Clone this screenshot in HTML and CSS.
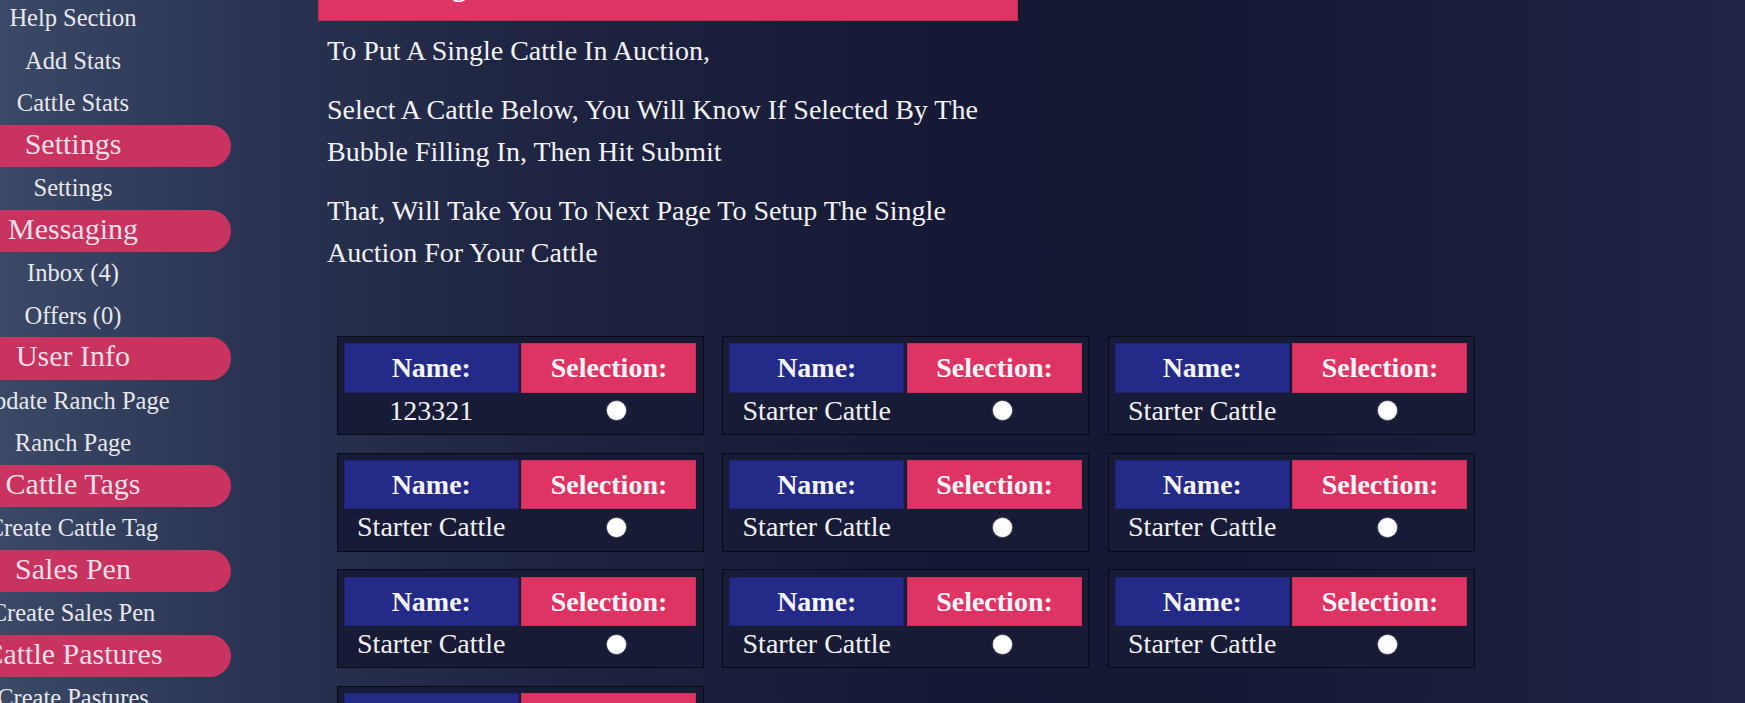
FILE: index.html
```html
<!DOCTYPE html>
<html lang="en">
<head>
<meta charset="utf-8">
<title>Single Cattle Auction</title>
<link rel="stylesheet" href="styles.css">
</head>
<body>
<div class="page">
  <nav class="sidebar">
    <a class="link">Help Section</a>
    <a class="link">Add Stats</a>
    <a class="link">Cattle Stats</a>
    <div class="pill">Settings</div>
    <a class="link">Settings</a>
    <div class="pill">Messaging</div>
    <a class="link">Inbox (4)</a>
    <a class="link">Offers (0)</a>
    <div class="pill">User Info</div>
    <a class="link">Update Ranch Page</a>
    <a class="link">Ranch Page</a>
    <div class="pill">Cattle Tags</div>
    <a class="link">Create Cattle Tag</a>
    <div class="pill">Sales Pen</div>
    <a class="link">Create Sales Pen</a>
    <div class="pill">Cattle Pastures</div>
    <a class="link">Create Pastures</a>
  </nav>

  <main class="main">
    <div class="title-bar"><h2 class="title">Single Cattle Auction</h2></div>
    <div class="intro">
      <p>To Put A Single Cattle In Auction,</p>
      <p>Select A Cattle Below, You Will Know If Selected By The Bubble Filling In, Then Hit Submit</p>
      <p>That, Will Take You To Next Page To Setup The Single Auction For Your Cattle</p>
    </div>

    <form class="cards">
      <div class="card">
        <div class="head name">Name:</div><div class="head sel">Selection:</div>
        <div class="cell">123321</div><div class="cell"><span class="radio"></span></div>
      </div>
      <div class="card">
        <div class="head name">Name:</div><div class="head sel">Selection:</div>
        <div class="cell">Starter Cattle</div><div class="cell"><span class="radio"></span></div>
      </div>
      <div class="card">
        <div class="head name">Name:</div><div class="head sel">Selection:</div>
        <div class="cell">Starter Cattle</div><div class="cell"><span class="radio"></span></div>
      </div>
      <div class="card">
        <div class="head name">Name:</div><div class="head sel">Selection:</div>
        <div class="cell">Starter Cattle</div><div class="cell"><span class="radio"></span></div>
      </div>
      <div class="card">
        <div class="head name">Name:</div><div class="head sel">Selection:</div>
        <div class="cell">Starter Cattle</div><div class="cell"><span class="radio"></span></div>
      </div>
      <div class="card">
        <div class="head name">Name:</div><div class="head sel">Selection:</div>
        <div class="cell">Starter Cattle</div><div class="cell"><span class="radio"></span></div>
      </div>
      <div class="card">
        <div class="head name">Name:</div><div class="head sel">Selection:</div>
        <div class="cell">Starter Cattle</div><div class="cell"><span class="radio"></span></div>
      </div>
      <div class="card">
        <div class="head name">Name:</div><div class="head sel">Selection:</div>
        <div class="cell">Starter Cattle</div><div class="cell"><span class="radio"></span></div>
      </div>
      <div class="card">
        <div class="head name">Name:</div><div class="head sel">Selection:</div>
        <div class="cell">Starter Cattle</div><div class="cell"><span class="radio"></span></div>
      </div>
      <div class="card">
        <div class="head name">Name:</div><div class="head sel">Selection:</div>
        <div class="cell">Starter Cattle</div><div class="cell"><span class="radio"></span></div>
      </div>
    </form>
  </main>
</div>
</body>
</html>
```

FILE: styles.css
```css
html {
  background: linear-gradient(90deg, #3b4966 0%, #2a3452 14%, #1d2340 32%, #161a36 52%, #141833 66%, #1a1e3c 84%, #1f2345 100%);
}
body {
  margin: 0;
  height: 703px;
  overflow: hidden;
  font-family: "Liberation Serif", "Times New Roman", serif;
  color: #f3f3f6;
}
.page {
  display: flex;
  align-items: flex-start;
}

/* Sidebar */
.sidebar {
  flex: 0 0 316px;
  width: 316px;
  margin-left: -85px;
  margin-top: -2.8px;
  display: flex;
  flex-direction: column;
}
.link {
  display: block;
  height: 42.5px;
  line-height: 42.5px;
  font-size: 24.5px;
  text-align: center;
  color: #e8e8ee;
  white-space: nowrap;
}
.pill {
  height: 42.5px;
  line-height: 37px;
  font-size: 30px;
  text-align: center;
  color: #eedfe7;
  background: #c93360;
  border-radius: 21px;
  white-space: nowrap;
}

/* Main */
.main {
  flex: 1;
  margin-left: 87px;
}
.title-bar {
  width: 698px;
  height: 60px;
  margin-top: -40px;
  background: #de3464;
  border: 1px solid #c02d58;
  border-top: none;
  display: flex;
  align-items: flex-end;
}
.title {
  margin: 0 0 19px 91px;
  font-size: 30px;
  line-height: 30px;
  font-weight: bold;
  color: #f5f5f7;
  white-space: nowrap;
}
.intro {
  width: 682px;
  padding: 9px 0 0 9px;
}
.intro p {
  margin: 0 0 17px;
  font-size: 28px;
  line-height: 42px;
}

/* Cards */
.cards {
  margin: 62px 0 0 18.5px;
  display: grid;
  grid-template-columns: repeat(3, 367px);
  column-gap: 18.5px;
  row-gap: 17.7px;
}
.card {
  box-sizing: border-box;
  width: 367px;
  height: 99px;
  border: 1px solid #080a16;
  background: #171b36;
  padding: 6.3px 6px 5px 6.3px;
  display: grid;
  grid-template-columns: 175px 175px;
  grid-template-rows: 49.4px 33px;
  column-gap: 2.7px;
  row-gap: 3px;
}
.head {
  box-sizing: border-box;
  font-size: 28px;
  font-weight: bold;
  line-height: 47.4px;
  text-align: center;
  color: #f6f6fa;
}
.name {
  background: #242a87;
  border: 1px solid #1e2370;
}
.sel {
  background: #de3464;
  border: 1px solid #c72e5a;
}
.cell {
  font-size: 28px;
  line-height: 30px;
  text-align: center;
  color: #f1f1f5;
  white-space: nowrap;
}
.radio {
  display: inline-block;
  width: 19px;
  height: 19px;
  margin-left: 16px;
  border-radius: 50%;
  background: #ffffff;
  box-shadow: 0 0 1px 0.5px #9a9aa6;
  vertical-align: -0.5px;
}
```
